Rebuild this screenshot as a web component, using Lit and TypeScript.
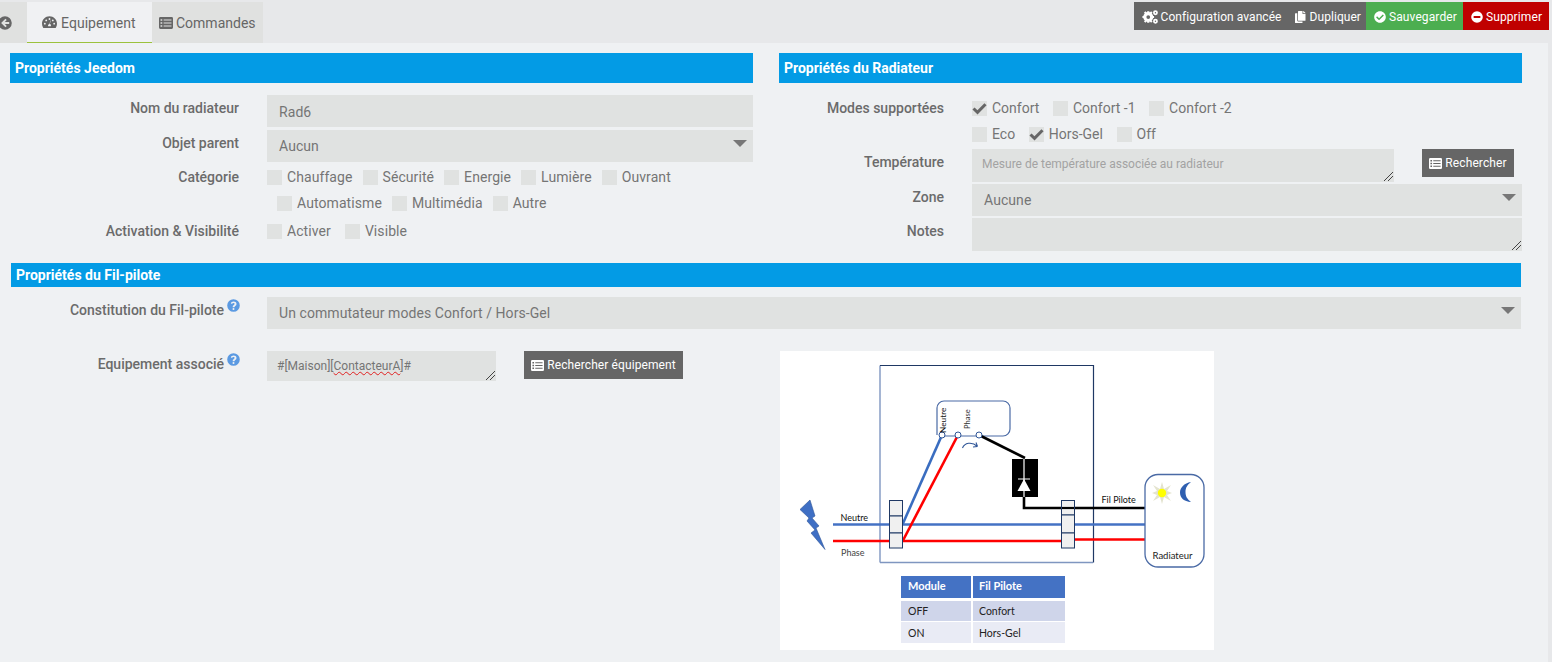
import { LitElement, html, css, svg } from 'lit';
import { customElement } from 'lit/decorators.js';

const icons = {
  back: svg`<path fill-rule="evenodd" d="M256 8a248 248 0 1 1 0 496a248 248 0 0 1 0-496zM270 100l-156 156l156 156l50-50l-70-70h160v-72h-160l70-70z"/>`,
  gauge: svg`<path fill-rule="evenodd" d="M256 40C115 40 0 155 0 296c0 50 14 96 39 136c6 9 16 14 27 14h380c11 0 21-5 27-14c25-40 39-86 39-136C512 155 397 40 256 40zM256 104a32 32 0 1 1 0 64a32 32 0 0 1 0-64zM96 328a32 32 0 1 1 0-64a32 32 0 0 1 0 64zM144 216a32 32 0 1 1 0-64a32 32 0 0 1 0 64zM368 152a32 32 0 1 1 0 64a32 32 0 0 1 0-64zM416 264a32 32 0 1 1 0 64a32 32 0 0 1 0-64zM300 190l-30 112c24 10 36 34 36 58c0 10-2 20-6 26H212c-4-6-6-16-6-26c0-28 22-52 50-54l30-120z"/>`,
  list: svg`<path fill-rule="evenodd" d="M48 40h416a48 48 0 0 1 48 48v336a48 48 0 0 1-48 48H48a48 48 0 0 1-48-48V88a48 48 0 0 1 48-48zM56 120v56h64v-56zM56 228v56h64v-56zM56 336v56h64v-56zM168 128v40h288v-40zM168 236v40h288v-40zM168 344v40h288v-40z"/>`,
  cogs: svg`<g><circle cx="200" cy="256" r="110" fill="none" stroke="currentColor" stroke-width="100"/><path d="M165 70h70v60h-70zM165 382h70v60h-70zM14 221h60v70H14zM326 221h60v70h-60z"/><path d="M62 118l46-46l46 46l-46 46zM246 118l46-46l46 46l-46 46zM62 394l46-46l46 46l-46 46zM246 394l46-46l46 46l-46 46z"/><circle cx="430" cy="120" r="50" fill="none" stroke="currentColor" stroke-width="56"/><circle cx="430" cy="390" r="50" fill="none" stroke="currentColor" stroke-width="56"/></g>`,
  copy: svg`<path d="M320 448v40c0 13-11 24-24 24H24c-13 0-24-11-24-24V120c0-13 11-24 24-24h72v296c0 31 25 56 56 56zM320 104V0H152c-13 0-24 11-24 24v368c0 13 11 24 24 24h272c13 0 24-11 24-24V128H344c-13 0-24-11-24-24zM441 73L375 7c-4-4-11-7-17-7h-6v96h96v-6c0-6-3-13-7-17z"/>`,
  check: svg`<path d="M504 256c0 137-111 248-248 248S8 393 8 256 119 8 256 8s248 111 248 248zM227 387l184-184c6-6 6-16 0-22l-22-23c-7-6-17-6-23 0L216 308l-70-70c-6-6-16-6-23 0l-22 23c-6 6-6 16 0 22l104 104c6 6 16 6 22 0z"/>`,
  minus: svg`<path fill-rule="evenodd" d="M256 8a248 248 0 1 1 0 496a248 248 0 0 1 0-496zM112 216v80h288v-80z"/>`,
  help: svg`<path fill-rule="evenodd" d="M256 8a248 248 0 1 1 0 496a248 248 0 0 1 0-496zM262 100c-60 0-94 28-112 70l46 30c12-24 28-38 60-38c22 0 44 12 44 32c0 40-76 42-76 112v16h72v-6c0-46 78-46 78-122c0-62-60-94-112-94zM256 350a40 40 0 1 0 0 80a40 40 0 0 0 0-80z"/>`,
};

const icon = (name: keyof typeof icons, size: number) =>
  html`<svg class="ic" width=${size} height=${size} viewBox="0 0 512 512" fill="currentColor">${icons[name]}</svg>`;

const checkbox = (label: string, checked = false) => html`
  <span class="cb">
    <span class="box">
      ${checked
        ? html`<svg width="15" height="15" viewBox="0 0 15 15"><path d="M1.5 7.5l4 3.8L13.5 3.2" fill="none" stroke="#666" stroke-width="3"/></svg>`
        : ''}
    </span>
    ${label}
  </span>
`;

const grip = html`<svg class="grip" width="9" height="9" viewBox="0 0 9 9"><path d="M0 9L9 0M4 9L9 4" stroke="#444" stroke-width="1"/></svg>`;

const select = (value: string) => html`<div class="field select">${value}<span class="caret"></span></div>`;

@customElement('fil-schema')
class FilSchema extends LitElement {
  static styles = css`
    :host {
      display: block;
      width: 434px;
      height: 299px;
      background: #fff;
    }
    svg {
      display: block;
    }
    text {
      font-family: Lato, 'Liberation Sans', sans-serif;
    }
  `;

  render() {
    return html`
      <svg width="434" height="299" viewBox="0 0 434 299">
        <path d="M100 211.5V14.5" stroke="#7f96c0" stroke-width="1.4" fill="none" />
        <path d="M100 211.5H313" stroke="#7f96c0" stroke-width="1.4" fill="none" />
        <path d="M100 14.5H313.5V211.5" stroke="#1f3864" stroke-width="1.2" fill="none" />

        <path d="M157 84V57a7 7 0 0 1 7-7h59a7 7 0 0 1 7 7v21a7 7 0 0 1-7 7H162" stroke="#4a6aa5" stroke-width="1.2" fill="#fff" />

        <path d="M53 173.5H365" stroke="#4472c4" stroke-width="2.6" />
        <path d="M53 190H281" stroke="#f00" stroke-width="2.6" />
        <path d="M295 188.5H365" stroke="#f00" stroke-width="2.6" />
        <path d="M122.7 173L162 84" stroke="#3a6dc0" stroke-width="2.6" />
        <path d="M122.7 190L178 84" stroke="#f00" stroke-width="2.6" />
        <path d="M199 84L245 107" stroke="#000" stroke-width="2.6" />
        <path d="M244 146V157H365" stroke="#000" stroke-width="2.6" fill="none" />

        <g fill="#f0f0f0" stroke="#1f3864" stroke-width="1">
          <rect x="109.5" y="149.5" width="13" height="15.5" />
          <rect x="109.5" y="165" width="13" height="17" />
          <rect x="109.5" y="182" width="13" height="15" />
          <rect x="281.5" y="149.5" width="13" height="14.5" />
          <rect x="281.5" y="164" width="13" height="18" />
          <rect x="281.5" y="182" width="13" height="15" />
        </g>
        <path d="M282 157H294" stroke="#000" stroke-width="2.2" />

        <g fill="#fff" stroke="#2f5597" stroke-width="1">
          <circle cx="162" cy="84" r="3" />
          <circle cx="178" cy="84" r="3" />
          <circle cx="199" cy="84" r="3" />
        </g>
        <path d="M182.5 97c2-5 9-7 15-1.5M197.5 95.5l-4.5 0.5M197.5 95.5l-1.5-4" stroke="#2f5597" stroke-width="1.1" fill="none" />

        <rect x="232" y="108" width="26" height="38" fill="#000" />
        <path d="M244 108V146M238 128H250" stroke="#fff" stroke-width="1.2" />
        <path d="M244 128L250.5 140H237.5Z" fill="#fff" />

        <path d="M30 149L35 165L32 167L39 175L36 177L45 198.5L31 182L35 179L27 170L29 167L20 158.5Z" fill="#3f6fc4" stroke="#2f5597" stroke-width="0.6" />

        <rect x="365" y="123.5" width="59" height="92.5" rx="13" fill="#fff" stroke="#4a6aa5" stroke-width="1.3" />
        <path d="M382 131L384 138L391 134L387 140L392 142L387 144L391 150L384 146L382 153L380 146L373 150L377 144L372 142L377 140L373 134L380 138Z" fill="#e4e4cf" />
        <circle cx="382" cy="142" r="4.2" fill="#ff0" />
        <path d="M411 131C404 132 400 137 400 141.5C400 147 404 150.5 411 151C407 148 405.5 145 405.5 141C405.5 137 407 134 411 131Z" fill="#2f5fb0" />

        <g font-size="9" fill="#111">
          <text x="60.5" y="170">Neutre</text>
          <text x="61" y="205" fill="#444">Phase</text>
          <text x="321.5" y="151.5">Fil Pilote</text>
        </g>
        <text x="372.5" y="208" font-size="9.5" fill="#222">Radiateur</text>
        <text transform="translate(166 82) rotate(-90)" font-size="8.3" fill="#111">Neutre</text>
        <text transform="translate(190 78) rotate(-90)" font-size="7.5" fill="#333">Phase</text>

        <rect x="121" y="225" width="70" height="22" fill="#4472c4" />
        <rect x="193" y="225" width="92" height="22" fill="#4472c4" />
        <rect x="121" y="250" width="70" height="20" fill="#cfd5ea" />
        <rect x="193" y="250" width="92" height="20" fill="#cfd5ea" />
        <rect x="121" y="271" width="70" height="21" fill="#e9ebf5" />
        <rect x="193" y="271" width="92" height="21" fill="#e9ebf5" />
        <g font-size="11" fill="#fff" font-weight="700">
          <text x="128" y="239">Module</text>
          <text x="199" y="239">Fil Pilote</text>
        </g>
        <g font-size="10.5" fill="#222">
          <text x="128" y="264">OFF</text>
          <text x="199" y="264">Confort</text>
          <text x="128" y="286">ON</text>
          <text x="199" y="286">Hors-Gel</text>
        </g>
      </svg>
    `;
  }
}

@customElement('app-root')
class AppRoot extends LitElement {
  static styles = css`
    :host {
      display: flex;
      flex-direction: column;
      min-height: 100vh;
      background: #e7e8ea;
      font-family: Roboto, 'Liberation Sans', sans-serif;
      font-size: 14px;
      color: #6b6b6b;
    }
    .ic {
      display: block;
      flex: none;
    }
    .top {
      display: flex;
      justify-content: space-between;
      align-items: flex-start;
      height: 43px;
      padding: 2px 3px 0 0;
      box-sizing: border-box;
    }
    .tabs {
      display: flex;
      height: 41px;
    }
    .tab {
      display: flex;
      align-items: center;
      gap: 4px;
      box-sizing: border-box;
      background: #e0e1e0;
      color: #666;
      padding-top: 1px;
    }
    .tab.back {
      width: 27px;
    }
    .tab.back .ic {
      margin-left: -2px;
    }
    .tab.active {
      width: 125px;
      padding-left: 15px;
      background: #f0f1f3;
      border-bottom: 1px solid #9bc23c;
      letter-spacing: 0.05px;
    }
    .tab.cmd {
      width: 111px;
      padding-left: 7px;
      gap: 3px;
    }
    .actions {
      display: flex;
      height: 28px;
      font-size: 12px;
      letter-spacing: 0.1px;
      color: #fff;
    }
    .act {
      display: flex;
      align-items: center;
      gap: 3px;
      height: 100%;
      box-sizing: border-box;
      padding-top: 1px;
    }
    .act.config {
      background: #666;
      padding: 1px 5px 0 8px;
      gap: 13px;
      letter-spacing: 0.06px;
    }
    .act.config span {
      display: flex;
      align-items: center;
      gap: 3px;
    }
    .act.save {
      background: #4cae50;
      width: 97px;
      padding-left: 8px;
    }
    .act.del {
      background: #c00000;
      width: 86px;
      padding-left: 8px;
    }
    main {
      flex: 1;
      width: 1548px;
      box-sizing: border-box;
      padding: 10px 0 0 10px;
      background: #eff1f3;
    }
    .cols {
      display: grid;
      grid-template-columns: 743px 743px;
      column-gap: 26px;
    }
    .head {
      height: 30px;
      line-height: 30px;
      padding-left: 5px;
      background: #039be5;
      color: #fff;
      font-weight: 700;
      font-size: 14px;
    }
    .rows {
      display: flex;
      flex-direction: column;
      padding-top: 12px;
    }
    .row {
      display: grid;
      grid-template-columns: 229px 1fr;
      column-gap: 28px;
    }
    .right .row {
      grid-template-columns: 165px 1fr;
    }
    .label {
      padding-top: 3px;
      line-height: 20px;
      text-align: right;
      font-weight: 500;
    }
    .field {
      position: relative;
      box-sizing: border-box;
      background: #e0e2e1;
      padding: 0 12px;
      color: #757575;
      letter-spacing: 0.07px;
    }
    .input {
      height: 32px;
      line-height: 34px;
    }
    .select {
      height: 32px;
      line-height: 32px;
    }
    .caret {
      position: absolute;
      right: 6px;
      top: 10px;
      border-left: 7px solid transparent;
      border-right: 7px solid transparent;
      border-top: 7px solid #777;
    }
    .ta {
      line-height: 30px;
      font-size: 12px;
      padding: 0 10px;
      letter-spacing: 0;
    }
    .placeholder {
      color: #a3a3a3;
    }
    .notes {
      height: 33px;
    }
    .grip {
      position: absolute;
      right: 1px;
      bottom: 1px;
    }
    .mt2 {
      margin-top: 2px;
    }
    .mt3 {
      margin-top: 3px;
    }
    .mt6 {
      margin-top: 6px;
    }
    .mt7 {
      margin-top: 7px;
    }
    .mt8 {
      margin-top: 8px;
    }
    .mt13 {
      margin-top: 13px;
    }
    .checks .label {
      padding-top: 0;
      line-height: 15px;
    }
    .lines {
      display: flex;
      flex-direction: column;
      gap: 11px;
    }
    .line {
      display: flex;
      gap: 10px;
      height: 15px;
      line-height: 15px;
      letter-spacing: 0.08px;
    }
    .line.indent {
      padding-left: 10px;
    }
    .line.wide {
      gap: 14px;
    }
    .right .line.wide {
      gap: 13.6px;
      letter-spacing: 0;
    }
    .cb {
      display: flex;
      align-items: center;
      gap: 5px;
      color: #757575;
    }
    .box {
      display: block;
      width: 15px;
      height: 15px;
      background: #e0e2e1;
    }
    .box svg {
      display: block;
    }
    .btn {
      display: flex;
      align-items: center;
      justify-content: center;
      gap: 3px;
      height: 28px;
      background: #666;
      color: #fff;
      font-size: 12px;
      letter-spacing: 0.1px;
    }
    .temp {
      display: flex;
      align-items: flex-start;
      gap: 28px;
    }
    .temp .ta {
      width: 422px;
      height: 33px;
    }
    .temp .btn {
      width: 92px;
    }
    .wide-head {
      width: 1505px;
      height: 24px;
      line-height: 24px;
      margin: 12px 0 0 1px;
    }
    .fil {
      padding: 10px 0 0 1px;
      width: 1510px;
    }
    .fil .row {
      grid-template-columns: 229px 1fr;
      column-gap: 27px;
    }
    .fil .label {
      display: flex;
      justify-content: flex-end;
      gap: 3px;
    }
    .help {
      color: #5b9ae2;
      margin-top: -1px;
    }
    .assoc {
      display: flex;
      margin-top: 22px;
    }
    .assoc .row {
      width: 769px;
      height: 30px;
      flex: none;
    }
    .assoc-ctl {
      display: flex;
      gap: 28px;
      align-items: flex-start;
    }
    .assoc-ctl .ta {
      width: 229px;
      height: 30px;
    }
    .assoc-ctl .btn {
      width: 159px;
    }
    .typo {
      text-decoration: underline wavy #e02020 1px;
      text-underline-offset: 1px;
    }
  `;

  render() {
    return html`
      <div class="top">
        <div class="tabs">
          <div class="tab back">${icon('back', 14)}</div>
          <div class="tab active">${icon('gauge', 15)}Equipement</div>
          <div class="tab cmd">${icon('list', 14)}Commandes</div>
        </div>
        <div class="actions">
          <div class="act config">
            <span>${icon('cogs', 16)}Configuration avancée</span>
            <span>${icon('copy', 12)}Dupliquer</span>
          </div>
          <div class="act save">${icon('check', 12)}Sauvegarder</div>
          <div class="act del">${icon('minus', 12)}Supprimer</div>
        </div>
      </div>
      <main>
        <div class="cols">
          <section>
            <div class="head">Propriétés Jeedom</div>
            <div class="rows">
              <div class="row">
                <div class="label">Nom du radiateur</div>
                <div class="field input">Rad6</div>
              </div>
              <div class="row mt3">
                <div class="label">Objet parent</div>
                ${select('Aucun')}
              </div>
              <div class="row checks mt8">
                <div class="label">Catégorie</div>
                <div class="lines">
                  <div class="line">
                    ${checkbox('Chauffage')}${checkbox('Sécurité')}${checkbox('Energie')}${checkbox('Lumière')}${checkbox('Ouvrant')}
                  </div>
                  <div class="line indent">
                    ${checkbox('Automatisme')}${checkbox('Multimédia')}${checkbox('Autre')}
                  </div>
                </div>
              </div>
              <div class="row checks mt13">
                <div class="label">Activation &amp; Visibilité</div>
                <div class="line wide">${checkbox('Activer')}${checkbox('Visible')}</div>
              </div>
            </div>
          </section>
          <section class="right">
            <div class="head">Propriétés du Radiateur</div>
            <div class="rows">
              <div class="row checks mt6">
                <div class="label">Modes supportées</div>
                <div class="lines">
                  <div class="line wide">
                    ${checkbox('Confort', true)}${checkbox('Confort -1')}${checkbox('Confort -2')}
                  </div>
                  <div class="line wide">
                    ${checkbox('Eco')}${checkbox('Hors-Gel', true)}${checkbox('Off')}
                  </div>
                </div>
              </div>
              <div class="row mt7">
                <div class="label">Température</div>
                <div class="temp">
                  <div class="field ta placeholder">Mesure de température associée au radiateur${grip}</div>
                  <div class="btn">${icon('list', 13)}Rechercher</div>
                </div>
              </div>
              <div class="row mt2">
                <div class="label">Zone</div>
                ${select('Aucune')}
              </div>
              <div class="row mt2">
                <div class="label">Notes</div>
                <div class="field ta notes">${grip}</div>
              </div>
            </div>
          </section>
        </div>
        <div class="head wide-head">Propriétés du Fil-pilote</div>
        <div class="fil">
          <div class="row">
            <div class="label">
              <span>Constitution du Fil-pilote</span>
              <span class="help">${icon('help', 13)}</span>
            </div>
            ${select('Un commutateur modes Confort / Hors-Gel')}
          </div>
          <div class="assoc">
            <div class="row">
              <div class="label">
                <span>Equipement associé</span>
                <span class="help">${icon('help', 13)}</span>
              </div>
              <div class="assoc-ctl">
                <div class="field ta">#[Maison][<span class="typo">ContacteurA</span>]#${grip}</div>
                <div class="btn">${icon('list', 13)}Rechercher équipement</div>
              </div>
            </div>
            <fil-schema></fil-schema>
          </div>
        </div>
      </main>
    `;
  }
}
